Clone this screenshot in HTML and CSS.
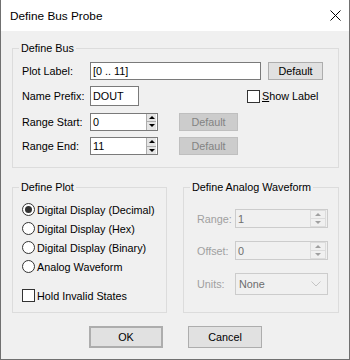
FILE: index.html
```html
<!DOCTYPE html>
<html lang="en">
<head>
  <meta charset="UTF-8">
  <title>Define Bus Probe</title>
  <link rel="stylesheet" href="styles.css">
</head>
<body>
  <div class="window">
    <div class="titlebar">
      <span class="title">Define Bus Probe</span>
      <svg class="close" width="11" height="11" viewBox="0 0 11 11">
        <path d="M0.5 0.5 L10.5 10.5 M10.5 0.5 L0.5 10.5" stroke="#000" stroke-width="1"/>
      </svg>
    </div>

    <div class="content">
      <fieldset class="group bus">
        <legend>Define Bus</legend>
        <div class="rows">
          <div class="row r1">
            <label class="lbl">Plot Label:</label>
            <div class="edit plot-label">[0 .. 11]</div>
            <button class="btn small">Default</button>
          </div>
          <div class="row r2">
            <label class="lbl">Name Prefix:</label>
            <div class="edit prefix">DOUT</div>
            <label class="check show-label"><span class="box"></span><span><u>S</u>how Label</span></label>
          </div>
          <div class="row r3">
            <label class="lbl">Range Start:</label>
            <div class="edit spin-edit">0<span class="spinner"><span class="up"></span><span class="down"></span></span></div>
            <button class="btn small disabled">Default</button>
          </div>
          <div class="row r4">
            <label class="lbl">Range End:</label>
            <div class="edit spin-edit">11<span class="spinner"><span class="up"></span><span class="down"></span></span></div>
            <button class="btn small disabled">Default</button>
          </div>
        </div>
      </fieldset>

      <div class="lower">
        <fieldset class="group plot">
          <legend>Define Plot</legend>
          <div class="options">
            <label class="radio checked"><span class="dot"></span>Digital Display (Decimal)</label>
            <label class="radio"><span class="dot"></span>Digital Display (Hex)</label>
            <label class="radio"><span class="dot"></span>Digital Display (Binary)</label>
            <label class="radio"><span class="dot"></span>Analog Waveform</label>
            <label class="check hold"><span class="box"></span><span>Hold Invalid States</span></label>
          </div>
        </fieldset>

        <fieldset class="group analog">
          <legend>Define Analog Waveform</legend>
          <div class="analog-rows">
            <div class="arow">
              <label class="lbl off">Range:</label>
              <div class="edit off wide">1<span class="spinner wide-spin"><span class="up"></span><span class="down"></span></span></div>
            </div>
            <div class="arow">
              <label class="lbl off">Offset:</label>
              <div class="edit off wide">0<span class="spinner wide-spin"><span class="up"></span><span class="down"></span></span></div>
            </div>
            <div class="arow units">
              <label class="lbl off">Units:</label>
              <div class="combo">
                <span class="combo-text">None</span>
                <svg width="10" height="6" viewBox="0 0 10 6"><path d="M0.5 0.5 L5 5 L9.5 0.5" fill="none" stroke="#c4c4c4"/></svg>
              </div>
            </div>
          </div>
        </fieldset>
      </div>

      <div class="buttons">
        <button class="btn big default">OK</button>
        <button class="btn big">Cancel</button>
      </div>
    </div>
  </div>
</body>
</html>
```

FILE: styles.css
```css
body {
  margin: 0;
  font-family: "Liberation Sans", Arial, sans-serif;
  font-size: 10.8px;
  color: #000;
}
.window {
  width: 350px;
  height: 360px;
  box-sizing: border-box;
  border: 1px solid #707070;
  border-top: none;
  background: #f0f0f0;
  display: flex;
  flex-direction: column;
}
.titlebar {
  height: 31px;
  flex: none;
  background: #fff;
  display: flex;
  align-items: center;
  justify-content: space-between;
  padding: 0 8px 0 9px;
  font-size: 11.8px;
}
.content {
  flex: 1;
  padding: 11px 10px 0 11px;
  display: flex;
  flex-direction: column;
}
.group {
  margin: 0;
  padding: 0;
  border: 1px solid #dcdcdc;
  min-width: 0;
}
.group legend {
  margin-left: 6px;
  padding: 0 2px;
  line-height: 13px;
}

/* define bus */
.rows {
  display: flex;
  flex-direction: column;
  gap: 6px;
  padding: 7px 10px 12px 9px;
}
.row {
  display: flex;
  align-items: center;
}
.r1 { height: 18px; }
.r2 { height: 20px; }
.r3 { height: 19px; }
.r4 { height: 18px; }
.lbl {
  width: 68px;
  flex: none;
}
.edit {
  box-sizing: border-box;
  height: 18px;
  border: 1px solid #7a7a7a;
  background: #fff;
  padding: 0 2px;
  display: flex;
  align-items: center;
}
.plot-label {
  width: 171px;
  margin-right: 7px;
}
.prefix {
  width: 49px;
  height: 20px;
}
.spin-edit {
  width: 68px;
  margin-right: 21px;
}
.spinner {
  margin-left: auto;
  margin-right: -1px;
  width: 10px;
  height: 16px;
  box-sizing: border-box;
  border-left: 1px solid #adadad;
  background: #e5e5e5;
  display: flex;
  flex-direction: column;
}
.spinner span {
  flex: 1;
  display: flex;
  align-items: center;
  justify-content: center;
}
.spinner .up {
  border-bottom: 1px solid #adadad;
}
.spinner .up::after {
  content: "";
  border-left: 3px solid transparent;
  border-right: 3px solid transparent;
  border-bottom: 3px solid #000;
}
.spinner .down::after {
  content: "";
  border-left: 3px solid transparent;
  border-right: 3px solid transparent;
  border-top: 3px solid #000;
}
.btn {
  font-family: inherit;
  font-size: inherit;
  color: #000;
  background: #e1e1e1;
  border: 1px solid #adadad;
  padding: 0;
  box-sizing: border-box;
}
.btn.small {
  height: 18px;
  width: 55px;
}
.btn.disabled {
  width: 59px;
  background: #cccccc;
  border-color: #bfbfbf;
  color: #838383;
}
.check {
  display: flex;
  align-items: center;
}
.check .box {
  width: 13px;
  height: 13px;
  box-sizing: border-box;
  border: 1px solid #333;
  background: #fff;
  margin-right: 2px;
  flex: none;
}
.show-label {
  margin-left: 108px;
}

/* lower groups */
.lower {
  display: flex;
  gap: 16px;
  margin-top: 13px;
}
.plot {
  width: 155px;
  height: 132px;
  box-sizing: border-box;
}
.analog {
  width: 156px;
  height: 132px;
  box-sizing: border-box;
}
.options {
  display: flex;
  flex-direction: column;
  padding: 6px 0 0 9px;
}
.radio {
  height: 19px;
  display: flex;
  align-items: center;
}
.radio .dot {
  width: 13px;
  height: 13px;
  box-sizing: border-box;
  border: 1px solid #333;
  border-radius: 50%;
  background: #fff;
  margin-right: 2px;
  display: flex;
  align-items: center;
  justify-content: center;
}
.radio.checked .dot::after {
  content: "";
  width: 7px;
  height: 7px;
  border-radius: 50%;
  background: #333;
}
.hold {
  margin-top: 13px;
}

.analog-rows {
  display: flex;
  flex-direction: column;
  gap: 13px;
  padding: 15px 0 0 13px;
}
.arow {
  display: flex;
  align-items: center;
  height: 19px;
}
.arow.units {
  height: 22px;
}
.arow .lbl {
  width: 38px;
}
.off {
  color: #a0a0a0;
}
.edit.off {
  color: #6d6d6d;
  border-color: #cccccc;
  background: #f0f0f0;
}
.edit.wide {
  width: 93px;
  height: 19px;
}
.spinner.wide-spin {
  width: 16px;
  height: 17px;
  border: 1px solid #dcdcdc;
  background: #f0f0f0;
  margin-right: -1px;
}
.wide-spin .up {
  border-bottom: 1px solid #dcdcdc;
}
.wide-spin .up::after {
  border-bottom-color: #a0a0a0;
}
.wide-spin .down::after {
  border-top-color: #a0a0a0;
}
.combo {
  width: 93px;
  height: 22px;
  box-sizing: border-box;
  border: 1px solid #cccccc;
  background: #f0f0f0;
  display: flex;
  align-items: center;
  padding: 0 6px 0 3px;
  justify-content: space-between;
  color: #6d6d6d;
}

.buttons {
  display: flex;
  justify-content: center;
  gap: 25px;
  margin-top: 13px;
}
.btn.big {
  width: 74px;
  height: 22px;
}
.btn.default {
  border: 2px solid #adadad;
}
```
